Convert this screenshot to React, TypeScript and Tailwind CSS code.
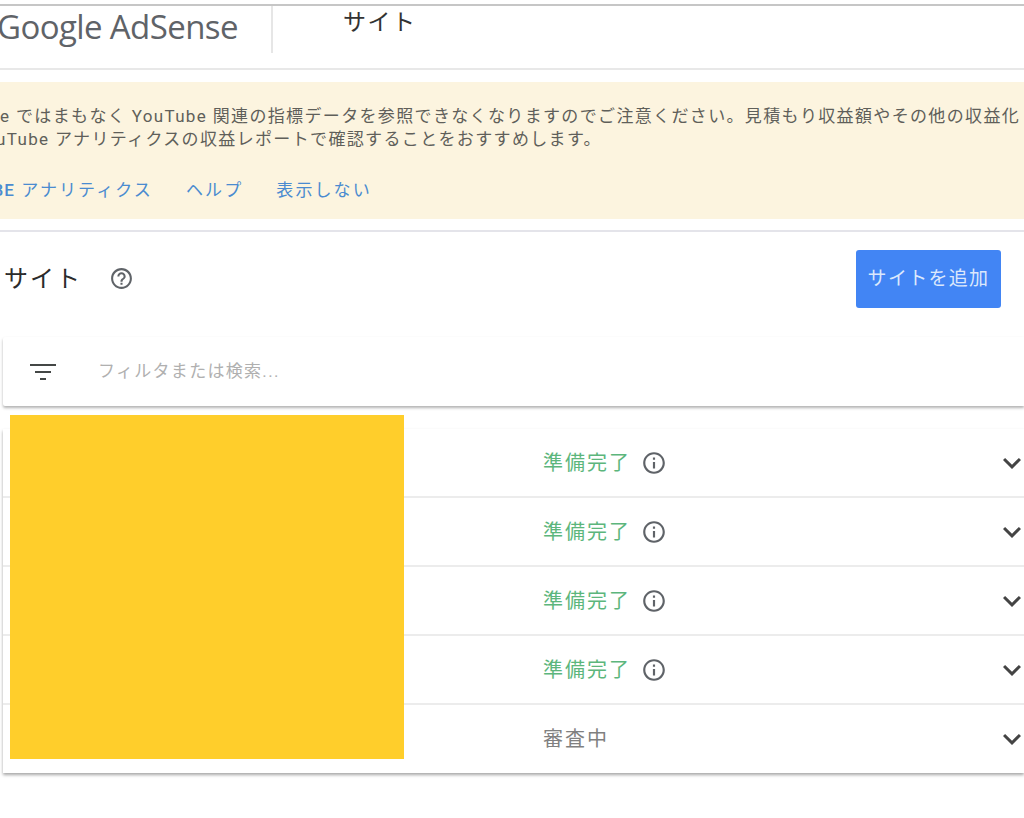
import React from 'react';
import { MdExpandMore, MdHelpOutline, MdInfoOutline } from 'react-icons/md';

const jp = 'font-["Roboto","Noto_Sans_CJK_JP",sans-serif]';

const sites = [
  { status: '準備完了', ready: true, height: 'h-[69px]' },
  { status: '準備完了', ready: true, height: 'h-[69px]' },
  { status: '準備完了', ready: true, height: 'h-[69px]' },
  { status: '準備完了', ready: true, height: 'h-[69px]' },
  { status: '審査中', ready: false, height: 'h-[68px]' },
];

const FilterIcon = () => (
  <svg width="26" height="16" viewBox="0 0 26 16" fill="none" stroke="#444746" strokeWidth="2">
    <path d="M0 1h26M5 8h16M10 15h6" />
  </svg>
);

const SiteRow = ({ status, ready, height }: { status: string; ready: boolean; height: string }) => (
  <div className={`flex items-center border-b-2 border-[#ececec] last:border-b-0 ${height}`}>
    <div className="w-[540px] shrink-0" />
    <span className={`text-[20px] tracking-[2px] ${ready ? 'text-[#5cb67c]' : 'text-[#808080]'}`}>{status}</span>
    {ready && <MdInfoOutline size={26} className="ml-[10px] text-[#5f6368]" />}
    <MdExpandMore size={36} className="ml-auto mr-[-6px] text-[#444]" />
  </div>
);

export default function App() {
  return (
    <div className={`relative h-[818px] w-[1024px] overflow-hidden bg-white ${jp}`}>
      <div className="pt-1">
        <div className="h-[2px] bg-[#c6c6c6]" />
      </div>

      <header className="flex h-[64px] border-b-2 border-[#e8e8e8]">
        <div className="flex h-[47px] w-[273px] shrink-0 items-start overflow-hidden border-r-2 border-[#e6e6e6]">
          <span className="ml-[-3px] mt-[3px] whitespace-nowrap font-['Open_Sans',sans-serif] text-[33px] leading-9 tracking-[-0.6px] text-[#5f6368]">
            Google AdSense
          </span>
        </div>
        <h1 className="ml-[70px] mt-[1px] text-[23px] leading-8 tracking-[1.5px] text-[#333]">サイト</h1>
      </header>

      <section className="mt-[12px] h-[137px] overflow-hidden bg-[#fcf4df] pt-[23px] text-[17px] leading-[23px] tracking-[1.35px] text-[#5f5f5a]">
        <p className="ml-[-66px] whitespace-nowrap">
          AdSense ではまもなく YouTube 関連の指標データを参照できなくなりますのでご注意ください。見積もり収益額やその他の収益化
        </p>
        <p className="ml-[-26px] whitespace-nowrap">
          YouTube アナリティクスの収益レポートで確認することをおすすめします。
        </p>
        <div className="ml-[-67px] mt-[28px] flex gap-[33px] whitespace-nowrap tracking-[2.1px] text-[#4a8bd0]">
          <a>
            <span className="font-medium tracking-[1px]">YOUTUBE</span> アナリティクス
          </a>
          <a>ヘルプ</a>
          <a>表示しない</a>
        </div>
      </section>

      <div className="mt-[11px] h-[2px] bg-[#e4e4ea]" />

      <div className="flex h-[105px] items-start">
        <h2 className="ml-[4px] mt-[29px] text-[24px] leading-9 tracking-[2px] text-[#2b2b2b]">サイト</h2>
        <MdHelpOutline size={25} className="ml-[27px] mt-[34px] text-[#5f6368]" />
        <button className="ml-auto mr-[23px] mt-[18px] h-[58px] w-[145px] rounded-[3px] bg-[#4285f4] pt-[1px] text-[19px] tracking-[1.3px] text-[#dbe8fc]">
          サイトを追加
        </button>
      </div>

      <div className="ml-[3px] flex h-[69px] items-center rounded-l-[2px] bg-white pl-[27px] shadow-[0_2px_3px_rgba(0,0,0,0.3)]">
        <FilterIcon />
        <span className="ml-[42px] text-[17px] tracking-[1.3px] text-[#b0b0b0]">フィルタまたは検索...</span>
      </div>

      <div className="ml-[3px] mt-[23px] bg-white shadow-[0_2px_3px_rgba(0,0,0,0.35)]">
        {sites.map((site, i) => (
          <SiteRow key={i} {...site} />
        ))}
      </div>

      {/* redacted block over the site names */}
      <div className="absolute left-[10px] top-[415px] h-[344px] w-[394px] bg-[#ffce2b]" />
    </div>
  );
}
